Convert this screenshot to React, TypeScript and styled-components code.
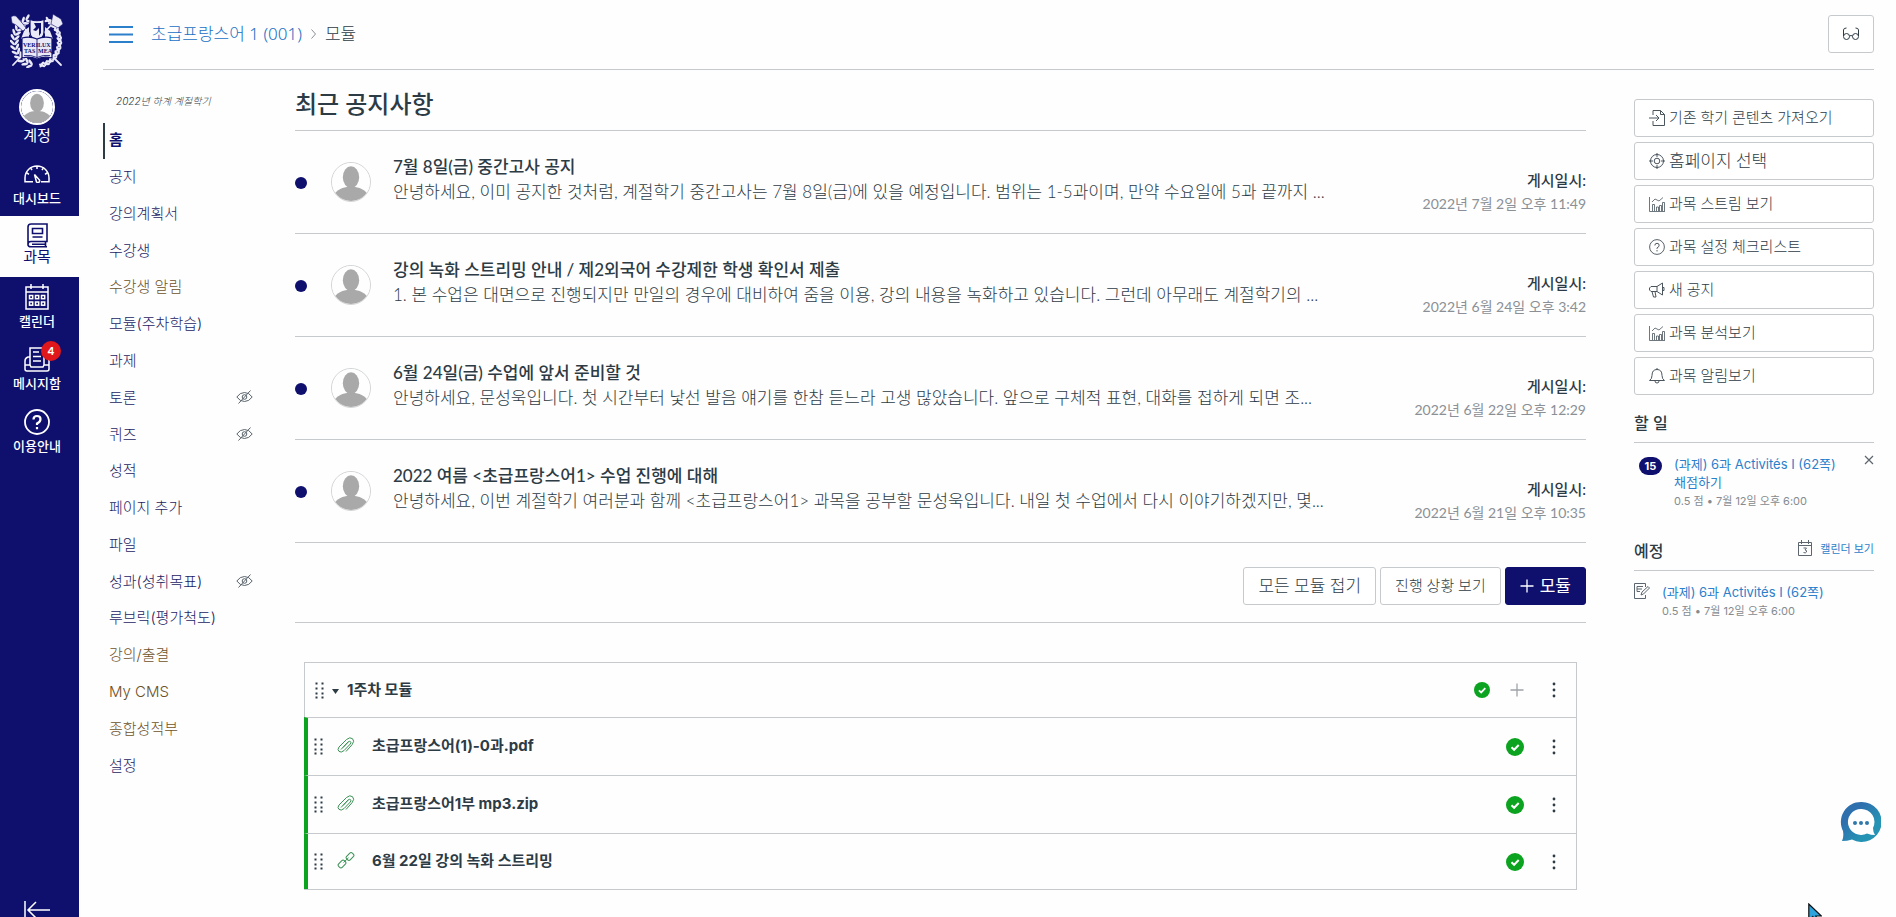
import React from "react";
import styled, { createGlobalStyle, css } from "styled-components";

const navy = "#0f0f6e";
const ink = "#2d3b45";
const line = "#c7cacd";
const blue = "#1a70c4";
const green = "#0ba31f";

const sans = `Inter, "Noto Sans CJK KR", sans-serif`;
const lato = `Lato, "Noto Sans CJK KR", sans-serif`;
const noto = `"Noto Sans", "Noto Sans CJK KR", sans-serif`;

const GlobalStyle = createGlobalStyle`
  * { box-sizing: border-box; }
  html, body, #root { height: 100%; }
  body {
    margin: 0;
    background: #fefefe;
    color: ${ink};
    font-family: ${sans};
    font-size: 15px;
    font-weight: 300;
    overflow: hidden;
  }
  a { color: inherit; text-decoration: none; }
  button { font: inherit; color: inherit; cursor: pointer; }
  h1, h2, h3, p, ul { margin: 0; padding: 0; }
  ul { list-style: none; }
  svg { display: block; flex: none; }
`;

const Shell = styled.div`
  display: flex;
  height: 100vh;
  overflow: hidden;
`;

/* Global navigation */

const GlobalNav = styled.nav`
  display: flex;
  flex-direction: column;
  align-items: center;
  flex: none;
  width: 79px;
  height: 100vh;
  padding-top: 11px;
  background: ${navy};
  color: #fff;
`;

const CrestLink = styled.a`
  margin-right: 5px;
`;

const GlobalList = styled.ul`
  width: 100%;
  margin-top: 13px;
`;

const GlobalLink = styled.a<{ $active?: boolean; $tall?: boolean }>`
  position: relative;
  display: flex;
  flex-direction: column;
  align-items: center;
  gap: 1px;
  padding: 7px 5px 8px 0;
  font-size: 13px;
  font-weight: 500;
  line-height: 20px;
  ${(p) => p.$tall && css`padding-top: 8px;`}
  ${(p) =>
    p.$active &&
    css`
      gap: 0;
      padding: 6px 5px 11px 0;
      background: #fefefe;
      color: ${navy};
      font-weight: 400;
      line-height: 18px;
    `}
`;

const GlobalLabel = styled.span<{ $large?: boolean }>`
  font-size: ${(p) => (p.$large ? "15px" : "13px")};
  font-weight: ${(p) => (p.$large ? 400 : 500)};
`;

const IconSlot = styled.span`
  display: flex;
  align-items: center;
  justify-content: center;
  height: 26px;
`;

const AvatarSlot = styled.span`
  width: 36px;
  height: 36px;
  border-radius: 50%;
  border: 2px solid #fff;
  overflow: hidden;
`;

const Badge = styled.span`
  position: absolute;
  top: 2px;
  left: 41px;
  width: 20px;
  height: 20px;
  border-radius: 10px;
  background: #e0171b;
  font-size: 11px;
  font-weight: 600;
  text-align: center;
`;

const CollapseButton = styled.button`
  margin-top: auto;
  margin-right: 5px;
  height: 18px;
  padding: 0;
  border: 0;
  background: none;
  overflow: hidden;
`;

/* Page frame */

const Page = styled.div`
  display: flex;
  flex-direction: column;
  flex: 1;
  min-width: 0;
  padding: 0 22px 0 24px;
`;

const Header = styled.header`
  display: flex;
  align-items: center;
  height: 70px;
  padding: 0 0 1px 6px;
  border-bottom: 1px solid ${line};
`;

const PlainButton = styled.button`
  display: flex;
  padding: 0;
  border: 0;
  background: none;
`;

const Crumbs = styled.nav`
  display: flex;
  align-items: center;
  gap: 9px;
  flex: 1;
  margin-left: 18px;
  font-family: ${noto};
  font-size: 17px;
  line-height: 24px;
  a { color: ${blue}; }
`;

const GlassesButton = styled.button`
  display: flex;
  align-items: center;
  justify-content: center;
  width: 46px;
  height: 38px;
  border: 1px solid ${line};
  border-radius: 3px;
  background: #fff;
`;

const Columns = styled.div`
  display: flex;
  align-items: flex-start;
`;

const CourseNav = styled.nav`
  flex: none;
  width: 192px;
  padding-top: 23px;
`;

const Term = styled.p`
  padding-left: 13px;
  font-size: 10px;
  font-style: italic;
  line-height: 16px;
`;

const CourseList = styled.ul`
  display: grid;
  grid-auto-rows: 1fr;
  min-height: 662px;
  margin-top: 14px;
`;

const CourseItem = styled.li`
  display: flex;
  align-items: center;
  justify-content: space-between;
  padding-right: 42px;
  svg { margin-bottom: 4px; }
`;

const CourseLink = styled.a<{ $active?: boolean; $external?: boolean }>`
  padding: 5px 0 7px 6px;
  color: ${(p) => (p.$external ? "#6d5229" : "#1c1c62")};
  line-height: 24px;
  ${(p) =>
    p.$active &&
    css`
      padding-left: 4px;
      border-left: 2px solid ${ink};
      color: ${navy};
      font-weight: 700;
    `}
`;

const Main = styled.main`
  flex: 1;
  min-width: 0;
`;

const Title = styled.h1`
  height: 61px;
  padding-top: 18px;
  border-bottom: 1px solid ${line};
  font-family: ${lato};
  font-size: 24px;
  font-weight: 500;
  line-height: 32px;
`;

const Notice = styled.li`
  display: flex;
  align-items: flex-start;
  height: 103px;
  padding-top: 23px;
  border-bottom: 1px solid ${line};
  font-family: ${lato};
`;

const Unread = styled.span`
  flex: none;
  width: 12px;
  height: 12px;
  margin: 23px 24px 0 0;
  border-radius: 50%;
  background: ${navy};
`;

const NoticeAvatar = styled.span`
  flex: none;
  width: 40px;
  height: 40px;
  margin: 8px 22px 0 0;
  border: 1px solid #d3d5d7;
  border-radius: 50%;
  overflow: hidden;
`;

const NoticeText = styled.div`
  flex: 1;
  min-width: 0;
  font-size: 17px;
  line-height: 25px;
  white-space: nowrap;
  overflow: hidden;
  h3 { font-size: 17px; font-weight: 500; }
`;

const NoticeDate = styled.div`
  flex: none;
  margin: 14px 0 0 24px;
  font-size: 14px;
  font-weight: 400;
  line-height: 24px;
  text-align: right;
  color: #8a9095;
  strong { display: block; font-size: 15px; font-weight: 500; color: ${ink}; }
`;

const Toolbar = styled.div`
  display: flex;
  justify-content: flex-end;
  gap: 4px;
  height: 80px;
  padding-top: 24px;
  border-bottom: 1px solid ${line};
`;

const ToolButton = styled.button<{ $large?: boolean; $primary?: boolean }>`
  display: flex;
  align-items: center;
  gap: 6px;
  height: 38px;
  padding: 0 14px 4px;
  border: 1px solid ${(p) => (p.$primary ? navy : line)};
  border-radius: 3px;
  background: ${(p) => (p.$primary ? navy : "#fff")};
  color: ${(p) => (p.$primary ? "#fff" : ink)};
  font-family: ${noto};
  font-size: ${(p) => (p.$large ? "17px" : "15px")};
  font-weight: ${(p) => (p.$primary ? 400 : 300)};
  white-space: nowrap;
  svg { margin-top: 3px; }
`;

const Module = styled.section`
  margin: 39px 9px 0;
  border: 1px solid ${line};
`;

const ModuleHead = styled.div`
  display: flex;
  align-items: center;
  height: 54px;
  padding: 0 16px 0 10px;
`;

const Caret = styled.svg`
  margin: 3px 0 0 8px;
`;

const ModuleName = styled.h2`
  flex: 1;
  margin-left: 8px;
  padding-bottom: 4px;
  font-size: 15px;
  font-weight: 700;
`;

const ModuleItem = styled.li`
  display: flex;
  align-items: center;
  height: 58px;
  margin-left: -1px;
  padding: 0 16px 0 6px;
  border-left: 4px solid ${green};
  border-top: 1px solid ${line};
  &:last-child { height: 56px; }
`;

const FileIcon = styled.span`
  margin: 0 0 2px 14px;
`;

const ItemName = styled.a`
  flex: 1;
  margin-left: 17px;
  padding-bottom: 4px;
  font-weight: 700;
`;

const Actions = styled.div<{ $gap: number }>`
  display: flex;
  align-items: center;
  gap: ${(p) => p.$gap}px;
`;

/* Right column */

const Side = styled.aside`
  flex: none;
  width: 240px;
  margin: 29px 0 0 48px;
`;

const SideButtons = styled.div`
  display: grid;
  gap: 5px;
`;

const SideButton = styled.button<{ $large?: boolean }>`
  display: flex;
  align-items: center;
  gap: 4px;
  height: 38px;
  padding: 0 14px 4px;
  border: 1px solid ${line};
  border-radius: 3px;
  background: #fff;
  font-family: ${noto};
  font-size: ${(p) => (p.$large ? "17px" : "15px")};
  svg { margin-top: 3px; color: #4a555e; }
`;

const SideHead = styled.div`
  display: flex;
  align-items: center;
  justify-content: space-between;
  height: 48px;
  padding-top: 6px;
  border-bottom: 1px solid ${line};
  h2 { font-size: 16px; font-weight: 500; }
`;

const CalendarLink = styled.a`
  display: flex;
  align-items: center;
  gap: 8px;
  padding-bottom: 3px;
  font-size: 11px;
  font-weight: 400;
  color: #2b7fcb;
`;

const Todo = styled.div`
  display: flex;
  align-items: flex-start;
  gap: 12px;
  padding-top: 12px;
`;

const Count = styled.span`
  flex: none;
  width: 23px;
  margin: 2px 0 0 5px;
  border-radius: 9px;
  background: ${navy};
  color: #fff;
  font-size: 11px;
  font-weight: 700;
  line-height: 18px;
  text-align: center;
`;

const TodoBody = styled.div`
  flex: 1;
  min-width: 0;
  font-size: 13px;
  line-height: 18px;
  word-break: keep-all;
  a { color: #2b7fcb; font-weight: 400; }
  p { font-size: 11px; font-weight: 400; line-height: 20px; color: #858b90; }
`;

const Upcoming = styled.div`
  margin-top: 12px;
`;

/* Floating layer */

const ChatButton = styled.button`
  position: fixed;
  right: 15px;
  bottom: 75px;
  padding: 0;
  border: 0;
  background: none;
`;

const Pointer = styled.span`
  position: fixed;
  right: 74px;
  bottom: -6px;
`;

/* Drawings */

function Person() {
  return (
    <svg width="100%" height="100%" viewBox="0 0 40 40">
      <circle cx="20" cy="20" r="20" fill="#fefefe" />
      <path d="M2 33C8 26 14 25 20 25s12 1 18 8c-4 5-10 8-18 8S6 38 2 33Z" fill="#a9a9a9" />
      <ellipse cx="20" cy="15" rx="8.6" ry="11.5" fill="#a9a9a9" />
    </svg>
  );
}

function Crest() {
  const leaves: React.ReactElement[] = [];
  for (let i = 0; i < 13; i++) {
    const a = 108 + i * 11.6;
    const t = (a * Math.PI) / 180;
    const x = 27 + 22.5 * Math.cos(t);
    const y = 30.5 + 24 * Math.sin(t);
    [-38, 38].forEach((d) => {
      leaves.push(
        <ellipse key={`l${i}${d}`} cx={x} cy={y} rx="3.4" ry="1.3" transform={`rotate(${a + 90 + d} ${x} ${y}) translate(1.4 ${d > 0 ? 1.6 : -1.6})`} />,
        <ellipse key={`r${i}${d}`} cx={54 - x} cy={y} rx="3.4" ry="1.3" transform={`rotate(${90 - a - d} ${54 - x} ${y}) translate(-1.4 ${d > 0 ? -1.6 : 1.6})`} />,
      );
    });
  }
  return (
    <svg width="54" height="58" viewBox="0 0 54 58" fill="#e9e9f7">
      <g stroke="#e9e9f7" strokeWidth="1.8" strokeLinecap="round">
        <path d="M3 54 48 7M51 54 5 8" />
      </g>
      {leaves}
      <path d="M1 6q2-2 5-1l7 8 3 4-3 3-7-6-4-2ZM43 3l3 2 5 3 2 5-5 4-7-4 1-5Z" stroke={navy} strokeWidth=".6" />
      <path d="m14 20 5-4v12h-8ZM40 20l-5-4v12h8Z" />
      <path d="M20 8.5q7 2.500 14 0V21q0 6-7 8-7-2-7-8Z" stroke={navy} strokeWidth="1.2" />
      <path d="M24 12h7v10l-2 3v-8l-3 3-3-1 3-3Z" fill={navy} />
      <path d="M12 27q8-2 15 1 7-3 15-1v20q-8-2-15 1-7-3-15-1Z" stroke={navy} strokeWidth="1.2" />
      <path d="M27 28v19M14 44.500q7-1 13 2 6-3 13-2" stroke={navy} fill="none" strokeWidth=".8" />
      <g fill={navy} fontFamily="Liberation Serif, serif" fontSize="6" fontWeight="700">
        <text x="13" y="35.500">VERI</text>
        <text x="28" y="35.500">LUX</text>
        <text x="14" y="42">TAS</text>
        <text x="28" y="42">MEA</text>
      </g>
    </svg>
  );
}

const stroke = { fill: "none", stroke: "currentColor" };

const GaugeIcon = () => (
  <svg width="26" height="18" viewBox="0 0 26 18" {...stroke} strokeWidth="1.5">
    <path d="M9 16.800H1V13a12 12 0 0 1 24 0v3.800h-8M12.500 17l-2-7.500 5 5.500q.500 2-1 2.500-1.500 0-2-.500ZM13 1v3M3 8l2 1.300M23 8l-2 1.300M7 3.500 8 5M19 3.500 18 5" />
  </svg>
);
const BookIcon = () => (
  <svg width="21" height="25" viewBox="0 0 21 25" {...stroke} strokeWidth="1.6">
    <path d="M3.500 1H20v17.500H4a3 2.600 0 0 0 0 5.300h16M1 21V4a3 3 0 0 1 3-3M18.500 18.500v5M5 21.200h14M5.500 5.500h10v5h-10ZM5.500 14h10" />
  </svg>
);
const CalendarIcon = () => (
  <svg width="24" height="26" viewBox="0 0 24 26" {...stroke} strokeWidth="1.500">
    <path d="M1 3h22v22H1ZM1 8h22M6 0v5M18 0v5" />
    {[11.5, 18].map((y) => [4.5, 10.5, 16.5].map((x) => <rect key={`${x}-${y}`} x={x} y={y} width="3.200" height="3.200" />))}
  </svg>
);
const InboxIcon = () => (
  <svg width="26" height="25" viewBox="0 0 26 25" {...stroke} strokeWidth="1.500">
    <path d="M6 18V1h14v17M9 5h6M9 9.500h8M9 14h8M6 10H4q-3 1-3 4v8q0 2 2 2h20q2 0 2-2v-8q0-3-3-4h-2M1 18h5l1 2h12l1-2h5" />
  </svg>
);
const HelpIcon = ({ size = 26 }: { size?: number }) => (
  <svg width={size} height={size} viewBox="0 0 26 26" {...stroke} strokeWidth={size > 20 ? 1.8 : 1.5}>
    <circle cx="13" cy="13" r="12" />
    <path d="M9.500 10.500q0-3.500 3.500-3.500t3.500 3-3.500 4.500V16M13 18v2.200" strokeWidth={size > 20 ? 2.2 : 1.6} />
  </svg>
);
const HiddenIcon = () => (
  <svg width="17" height="14" viewBox="0 0 17 14" {...stroke} color="#59636b">
    <path d="M.800 7Q4 2.500 8.500 2.500T16.200 7Q13 11.500 8.500 11.500T.800 7ZM14.500.500l-12 13" />
    <circle cx="8.500" cy="7" r="2.300" />
  </svg>
);
const ImportIcon = () => (
  <svg width="16" height="16" viewBox="0 0 16 16" {...stroke}>
    <path d="M4 5V.500h7.500l4 4v11H4V11M11.500.500v4h4M0 8h10M7 5l3 3-3 3" />
  </svg>
);
const TargetIcon = () => (
  <svg width="16" height="16" viewBox="0 0 16 16" {...stroke}>
    <circle cx="8" cy="8" r="6.500" />
    <circle cx="8" cy="8" r="2.800" />
    <path d="M8 0v4M8 12v4M0 8h4M12 8h4" />
  </svg>
);
const ChartIcon = () => (
  <svg width="16" height="16" viewBox="0 0 16 16" {...stroke}>
    <path d="M.500 1v14.500H16M3.500 15V8.500h2V15M7.500 15v-4h2v4M10.500 15V9.500h2V15M13.500 15V6.500h2V15M3 6l3-3 4 2 4-3.500" strokeWidth=".8" />
  </svg>
);
const MegaphoneIcon = () => (
  <svg width="16" height="16" viewBox="0 0 16 16" {...stroke}>
    <path d="M2 4.500h6l5.500-3.500v12L8 9.500H2L.500 8V6ZM8 4.500v5M13.500 5.500h1.500v3h-1.500M3 9.500l1.500 5.500h2.500L6 9.500" />
  </svg>
);
const BellIcon = () => (
  <svg width="16" height="16" viewBox="0 0 16 16" {...stroke}>
    <path d="M.500 12.500H15.500Q13 11 13 7.500 13 1.500 8 1.500T3 7.500Q3 11 .500 12.500ZM6 13q0 2 2 2t2-2M8 0v1.500" />
  </svg>
);
const GlassesIcon = () => (
  <svg width="16" height="14" viewBox="0 0 16 14" {...stroke}>
    <circle cx="3.500" cy="9.500" r="3" />
    <circle cx="12.500" cy="9.500" r="3" />
    <path d="M.500 9V3q0-2 3-2M15.500 9V3q0-2-3-2M6.500 9q1.500-1 3 0" />
  </svg>
);
const Grip = () => (
  <svg width="9" height="17" viewBox="0 0 9 17" fill={ink}>
    {[1, 6, 11, 15].map((y) => [0, 6].map((x) => <rect key={`${x}-${y}`} x={x + 0.5} y={y - 0.5} width="2" height="2" />))}
  </svg>
);
const ClipIcon = () => (
  <svg width="18" height="17" viewBox="0 0 18 17" {...stroke} color="#3a9155">
    <path d="M4 12.500 11 5q1.500-1.200 2.500-.300T13.300 7L7 13.600q-3 2.500-5 .800t0-4.400L9.500 2.500q3.500-3 6-.800t-.300 5.800L9 14.500M6 10.500l5-5.200" />
  </svg>
);
const LinkIcon = () => (
  <svg width="18" height="17" viewBox="0 0 18 17" {...stroke} color="#3a9155">
    <rect x="-4" y="-2.500" width="8" height="5" rx="1.800" transform="translate(5 12) rotate(-45)" />
    <rect x="-4" y="-2.500" width="8" height="5" rx="1.800" transform="translate(13 4.500) rotate(-45)" />
    <path d="m6.500 10.500 5-4.700" />
  </svg>
);
const Check = ({ size }: { size: number }) => (
  <svg width={size} height={size} viewBox="0 0 18 18">
    <circle cx="9" cy="9" r="9" fill={green} />
    <path d="m5.500 9.300 2.600 2.500 4.600-4.800" fill="none" stroke="#fff" strokeWidth="2" />
  </svg>
);
const Kebab = () => (
  <svg width="12" height="16" viewBox="0 0 12 16" fill={ink}>
    {[2, 8, 14].map((y) => <circle key={y} cx="6" cy={y} r="1.400" />)}
  </svg>
);
const Plus = ({ color }: { color: string }) => (
  <svg width="14" height="14" viewBox="0 0 14 14" stroke={color} strokeWidth="1.300">
    <path d="M7 .500v13M.500 7h13" />
  </svg>
);

/* Data */

const courseLinks: { name: string; hidden?: boolean; external?: boolean }[] = [
  { name: "홈" },
  { name: "공지" },
  { name: "강의계획서" },
  { name: "수강생" },
  { name: "수강생 알림", external: true },
  { name: "모듈(주차학습)" },
  { name: "과제" },
  { name: "토론", hidden: true },
  { name: "퀴즈", hidden: true },
  { name: "성적" },
  { name: "페이지 추가" },
  { name: "파일" },
  { name: "성과(성취목표)", hidden: true },
  { name: "루브릭(평가척도)" },
  { name: "강의/출결", external: true },
  { name: "My CMS", external: true },
  { name: "종합성적부", external: true },
  { name: "설정" },
];

const notices = [
  {
    title: "7월 8일(금) 중간고사 공지",
    body: "안녕하세요, 이미 공지한 것처럼, 계절학기 중간고사는 7월 8일(금)에 있을 예정입니다. 범위는 1-5과이며, 만약 수요일에 5과 끝까지 ...",
    date: "2022년 7월 2일 오후 11:49",
  },
  {
    title: "강의 녹화 스트리밍 안내 / 제2외국어 수강제한 학생 확인서 제출",
    body: "1. 본 수업은 대면으로 진행되지만 만일의 경우에 대비하여 줌을 이용, 강의 내용을 녹화하고 있습니다. 그런데 아무래도 계절학기의 ...",
    date: "2022년 6월 24일 오후 3:42",
  },
  {
    title: "6월 24일(금) 수업에 앞서 준비할 것",
    body: "안녕하세요, 문성욱입니다. 첫 시간부터 낯선 발음 얘기를 한참 듣느라 고생 많았습니다. 앞으로 구체적 표현, 대화를 접하게 되면 조...",
    date: "2022년 6월 22일 오후 12:29",
  },
  {
    title: "2022 여름 <초급프랑스어1> 수업 진행에 대해",
    body: "안녕하세요, 이번 계절학기 여러분과 함께 <초급프랑스어1> 과목을 공부할 문성욱입니다. 내일 첫 수업에서 다시 이야기하겠지만, 몇...",
    date: "2022년 6월 21일 오후 10:35",
  },
];

const files = [
  { name: "초급프랑스어(1)-0과.pdf", icon: <ClipIcon /> },
  { name: "초급프랑스어1부 mp3.zip", icon: <ClipIcon /> },
  { name: "6월 22일 강의 녹화 스트리밍", icon: <LinkIcon /> },
];

const sideActions = [
  { name: "기존 학기 콘텐츠 가져오기", icon: <ImportIcon /> },
  { name: "홈페이지 선택", icon: <TargetIcon />, large: true },
  { name: "과목 스트림 보기", icon: <ChartIcon /> },
  { name: "과목 설정 체크리스트", icon: <HelpIcon size={16} /> },
  { name: "새 공지", icon: <MegaphoneIcon /> },
  { name: "과목 분석보기", icon: <ChartIcon /> },
  { name: "과목 알림보기", icon: <BellIcon /> },
];

export default function App() {
  return (
    <>
      <GlobalStyle />
      <Shell>
        <GlobalNav>
          <CrestLink href="#main" aria-label="서울대학교">
            <Crest />
          </CrestLink>
          <GlobalList>
            <li>
              <GlobalLink href="#account">
                <AvatarSlot><Person /></AvatarSlot>
                <GlobalLabel $large>계정</GlobalLabel>
              </GlobalLink>
            </li>
            <li>
              <GlobalLink href="#dashboard">
                <IconSlot><GaugeIcon /></IconSlot>
                <GlobalLabel>대시보드</GlobalLabel>
              </GlobalLink>
            </li>
            <li>
              <GlobalLink href="#courses" $active>
                <IconSlot><BookIcon /></IconSlot>
                <GlobalLabel $large>과목</GlobalLabel>
              </GlobalLink>
            </li>
            <li>
              <GlobalLink href="#calendar">
                <IconSlot><CalendarIcon /></IconSlot>
                <GlobalLabel>캘린더</GlobalLabel>
              </GlobalLink>
            </li>
            <li>
              <GlobalLink href="#inbox">
                <IconSlot><InboxIcon /></IconSlot>
                <Badge>4</Badge>
                <GlobalLabel>메시지함</GlobalLabel>
              </GlobalLink>
            </li>
            <li>
              <GlobalLink href="#help" $tall>
                <IconSlot><HelpIcon /></IconSlot>
                <GlobalLabel>이용안내</GlobalLabel>
              </GlobalLink>
            </li>
          </GlobalList>
          <CollapseButton aria-label="메뉴 접기">
            <svg width="26" height="22" viewBox="0 0 26 22" fill="none" stroke="#fff" strokeWidth="1.500">
              <path d="M1 2v18M26 11H4M12 3l-8 8 8 8" />
            </svg>
          </CollapseButton>
        </GlobalNav>

        <Page>
          <Header>
            <PlainButton aria-label="과목 메뉴">
              <svg width="24" height="17" viewBox="0 0 24 17" stroke="#2b7fcb" strokeWidth="2">
                <path d="M0 1h24M0 8.500h24M0 16h24" />
              </svg>
            </PlainButton>
            <Crumbs>
              <a href="#course">초급프랑스어 1 (001)</a>
              <svg width="5" height="10" viewBox="0 0 5 10" fill="none" stroke="#8a9096">
                <path d="m.500.500 4 4.500-4 4.500" />
              </svg>
              <span>모듈</span>
            </Crumbs>
            <GlassesButton aria-label="학생 보기"><GlassesIcon /></GlassesButton>
          </Header>

          <Columns>
            <CourseNav>
              <Term>2022년 하계 계절학기</Term>
              <CourseList>
                {courseLinks.map((l, i) => (
                  <CourseItem key={l.name}>
                    <CourseLink href={`#nav${i}`} $active={i === 0} $external={l.external}>{l.name}</CourseLink>
                    {l.hidden && <HiddenIcon />}
                  </CourseItem>
                ))}
              </CourseList>
            </CourseNav>

            <Main id="main">
              <Title>최근 공지사항</Title>
              <ul>
                {notices.map((n) => (
                  <Notice key={n.title}>
                    <Unread />
                    <NoticeAvatar><Person /></NoticeAvatar>
                    <NoticeText>
                      <h3>{n.title}</h3>
                      <p>{n.body}</p>
                    </NoticeText>
                    <NoticeDate><strong>게시일시:</strong>{n.date}</NoticeDate>
                  </Notice>
                ))}
              </ul>
              <Toolbar>
                <ToolButton $large>모든 모듈 접기</ToolButton>
                <ToolButton>진행 상황 보기</ToolButton>
                <ToolButton $large $primary><Plus color="#fff" />모듈</ToolButton>
              </Toolbar>
              <Module>
                <ModuleHead>
                  <Grip />
                  <Caret width="7" height="5" viewBox="0 0 7 5" fill={ink}>
                    <path d="M0 0h7L3.500 5Z" />
                  </Caret>
                  <ModuleName>1주차 모듈</ModuleName>
                  <Actions $gap={24}>
                    <Actions $gap={20}>
                      <Check size={16} />
                      <PlainButton aria-label="항목 추가"><Plus color="#9da3a8" /></PlainButton>
                    </Actions>
                    <PlainButton aria-label="모듈 설정"><Kebab /></PlainButton>
                  </Actions>
                </ModuleHead>
                <ul>
                  {files.map((f) => (
                    <ModuleItem key={f.name}>
                      <Grip />
                      <FileIcon>{f.icon}</FileIcon>
                      <ItemName href="#item">{f.name}</ItemName>
                      <Actions $gap={24}>
                        <Check size={18} />
                        <PlainButton aria-label="항목 설정"><Kebab /></PlainButton>
                      </Actions>
                    </ModuleItem>
                  ))}
                </ul>
              </Module>
            </Main>

            <Side>
              <SideButtons>
                {sideActions.map((a) => (
                  <SideButton key={a.name} $large={a.large}>{a.icon}{a.name}</SideButton>
                ))}
              </SideButtons>
              <SideHead><h2>할 일</h2></SideHead>
              <Todo>
                <Count>15</Count>
                <TodoBody>
                  <a href="#grade">(과제) 6과 Activités I (62쪽) 채점하기</a>
                  <p>0.5 점 • 7월 12일 오후 6:00</p>
                </TodoBody>
                <PlainButton aria-label="닫기">
                  <svg width="10" height="10" viewBox="0 0 10 10" stroke="#5d666e" strokeWidth="1.200"><path d="m1 1 8 8M9 1 1 9" /></svg>
                </PlainButton>
              </Todo>
              <Upcoming>
                <SideHead>
                  <h2>예정</h2>
                  <CalendarLink href="#calendar">
                    <svg width="14" height="16" viewBox="0 0 14 16" {...stroke} color="#5d666e">
                      <path d="M.500 2.500h13v13H.500ZM.500 5.500h13M3.500 0v4M10.500 0v4M5.500 8h3L7 10q2 0 1.500 2-1 1.500-3 .500" />
                    </svg>
                    캘린더 보기
                  </CalendarLink>
                </SideHead>
                <Todo>
                  <svg width="16" height="16" viewBox="0 0 16 16" {...stroke} color="#5d666e">
                    <path d="M11.500 4V.500H.500v15h11V12M3 3.500h6M3 6h5M3 8.500h3M7 12l1-3 6-5.500 1.500 1.500-6 6ZM3 3.500v5" />
                  </svg>
                  <TodoBody>
                    <a href="#assignment">(과제) 6과 Activités I (62쪽)</a>
                    <p>0.5 점 • 7월 12일 오후 6:00</p>
                  </TodoBody>
                </Todo>
              </Upcoming>
            </Side>
          </Columns>
        </Page>
      </Shell>

      <ChatButton aria-label="채팅 상담">
        <svg width="41" height="41" viewBox="0 0 41 41">
          <defs>
            <linearGradient id="chat" x1="0" y1="0" x2="1" y2="1">
              <stop offset="0.300" stopColor="#2e70ae" />
              <stop offset="0.700" stopColor="#2593b4" />
            </linearGradient>
          </defs>
          <path d="M21 1a20 20 0 1 1-9 37.500Q7 40 2 40q2-4 1-10A20 20 0 0 1 21 1Z" fill="url(#chat)" />
          <path d="M21 8a13 13 0 1 0 6 24.500q4 1.500 8 1.500-2-3-2-7A13 13 0 0 0 21 8Z" fill="#fff" />
          <g fill="#2f78ab"><circle cx="15" cy="22" r="2" /><circle cx="21" cy="22" r="2" /><circle cx="27" cy="22" r="2" /></g>
        </svg>
      </ChatButton>
      <Pointer>
        <svg width="14" height="20" viewBox="0 0 14 20">
          <path d="M.800 1v17l4-4.500 3 6 2.500-1-2.500-5.500h5.500Z" fill="#2ea3dc" stroke="#111" strokeWidth="1.200" />
        </svg>
      </Pointer>
    </>
  );
}
